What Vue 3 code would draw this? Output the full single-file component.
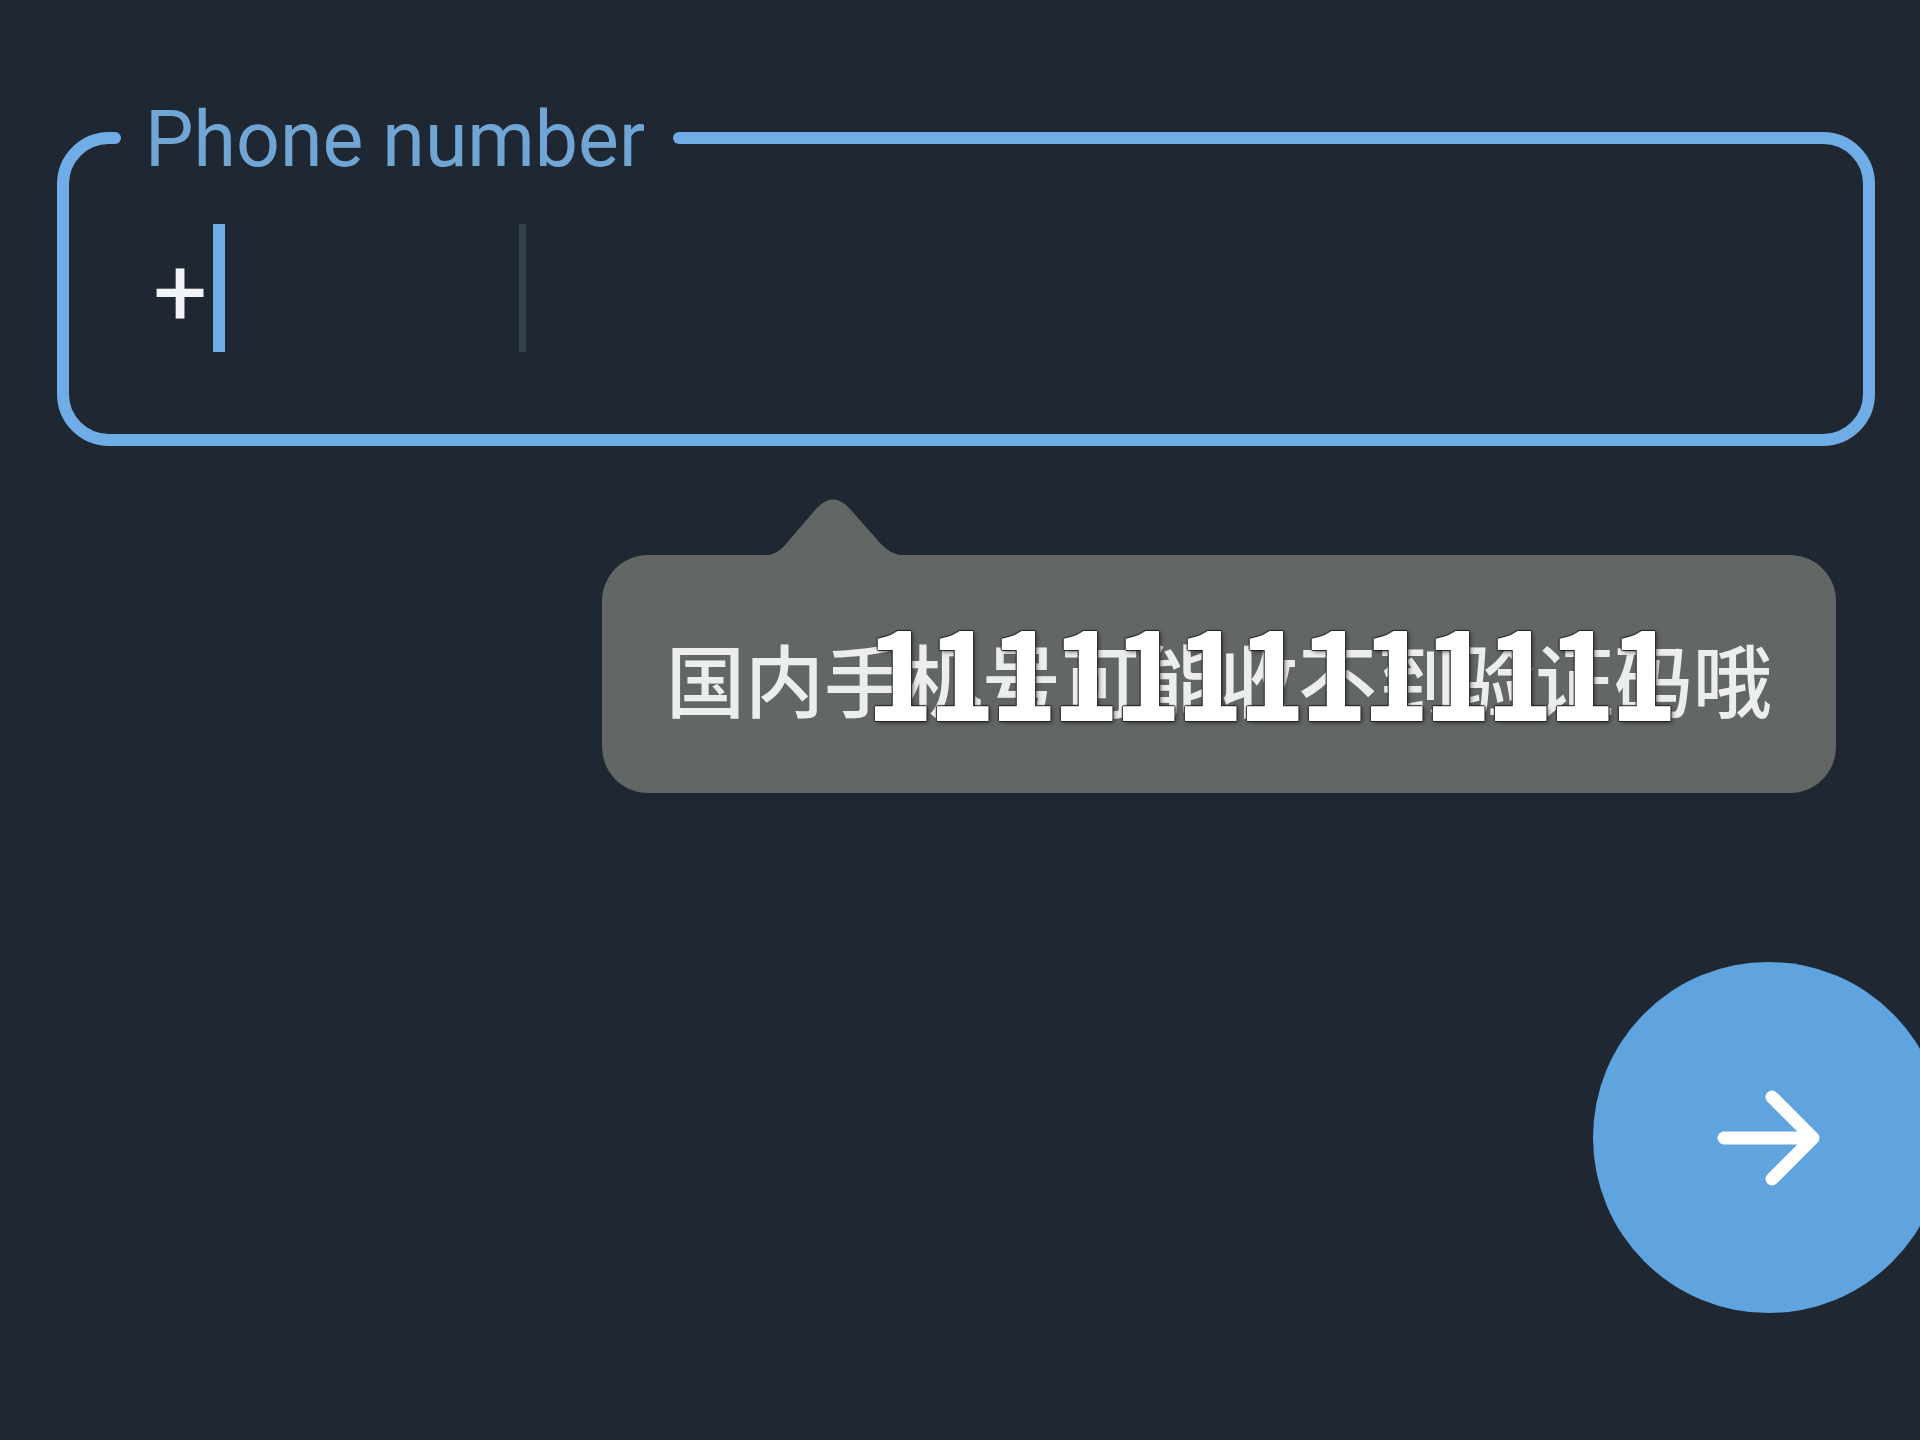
<script setup>
import { ref } from 'vue'

const code = ref('+')
const number = ref('')
const hint = '国内手机号可能收不到验证码哦'
const overlay = '1111111111111'
</script>

<template>
  <main class="page">
    <form class="form" @submit.prevent>
      <fieldset class="field">
        <legend class="legend"><label for="code">Phone number</label></legend>
        <div class="row">
          <input id="code" v-model="code" class="code" type="text" inputmode="tel" />
          <span class="caret"></span>
          <span class="gap"></span>
          <span class="divider"></span>
          <input v-model="number" class="number" type="tel" aria-label="Number" />
        </div>
      </fieldset>

      <div class="bubble" role="tooltip">
        <svg class="tip" viewBox="0 0 144 57" aria-hidden="true">
          <path d="M0 57C11 56 17 53 23 46L54 10Q71 -9 88 10L119 45C127 53 133 56 144 57Z" fill="currentColor" />
        </svg>
        <p class="hint">{{ hint }}</p>
        <span class="overlay">{{ overlay }}</span>
      </div>

      <button class="next" type="submit" aria-label="Next">
        <svg viewBox="0 0 106 98" aria-hidden="true">
          <path d="M8 49H97M56 8L97 49L56 90" fill="none" stroke="currentColor" stroke-width="13" stroke-linecap="round" stroke-linejoin="round" />
        </svg>
      </button>
    </form>
  </main>
</template>

<style>
body {
  background: #1e2732;
}
</style>

<style scoped>
.page {
  min-height: 100vh;
  box-sizing: border-box;
  padding: 92px 0 80px;
  overflow: hidden;
  background: #1e2732;
  font-family: Roboto, "Noto Sans CJK SC", sans-serif;
}

.form {
  display: flex;
  flex-direction: column;
}

.field {
  min-width: 0;
  margin: 0 45px 0 57px;
  padding: 0 52px 82px 80px;
  border: 12px solid #70ace6;
  border-radius: 52px;
}

.legend {
  position: relative;
  margin-left: -34px;
  padding: 4px 34px 0 30px;
  color: #70a5d4;
  font-size: 77px;
  line-height: 88px;
}

.legend::before,
.legend::after {
  content: "";
  position: absolute;
  top: 40px;
  width: 12px;
  height: 12px;
  border-radius: 6px;
  background: #70ace6;
}

.legend::before {
  left: -6px;
}

.legend::after {
  right: -6px;
}

.row {
  display: flex;
  align-items: center;
  height: 128px;
  margin-top: 40px;
}

.code,
.number {
  box-sizing: border-box;
  height: 128px;
  padding: 10px 0 0;
  border: 0;
  outline: 0;
  background: transparent;
  color: #f1f3f6;
  font-family: inherit;
  font-size: 96px;
}

.code {
  width: 64px;
  padding-left: 4px;
}

.caret {
  width: 12px;
  height: 128px;
  background: #70ace6;
}

.gap {
  width: 294px;
}

.divider {
  width: 7px;
  height: 128px;
  background: #344250;
}

.number {
  flex: 1;
  min-width: 0;
  padding-left: 40px;
}

.bubble {
  position: relative;
  align-self: flex-end;
  margin: 109px 84px 0 0;
  padding: 64px;
  border-radius: 46px;
  background: #626664;
}

.tip {
  position: absolute;
  left: 160px;
  bottom: 100%;
  width: 144px;
  height: 57px;
  margin-bottom: -1px;
  color: #626664;
}

.hint {
  margin: 0;
  padding-top: 8px;
  color: #eceeed;
  font-family: "Noto Sans CJK SC", sans-serif;
  font-size: 79px;
  font-weight: 500;
  line-height: 102px;
  white-space: nowrap;
}

.overlay {
  position: absolute;
  top: 50px;
  left: 267px;
  color: #fff;
  font-family: "Noto Sans Mono CJK SC", "Noto Sans CJK SC", sans-serif;
  font-size: 124px;
  font-weight: 700;
  font-feature-settings: "hwid";
  line-height: 124px;
  white-space: nowrap;
  text-shadow: 1px 0 1px #222, -1px 0 1px #222, 0 1px 1px #222, 0 -1px 1px #222, 2px 2px 4px #2229;
}

.next {
  display: flex;
  align-items: center;
  justify-content: center;
  align-self: flex-end;
  width: 351px;
  height: 351px;
  margin: 169px -24px 0 0;
  padding: 0;
  border: 0;
  border-radius: 50%;
  background: #5fa3df;
  color: #fff;
}

.next svg {
  width: 106px;
  height: 98px;
}
</style>
